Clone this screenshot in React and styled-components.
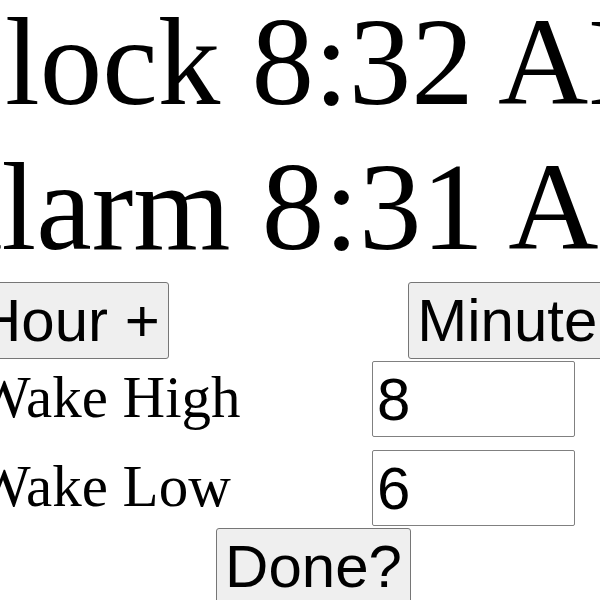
import React, { useState } from "react";
import styled, { createGlobalStyle } from "styled-components";

const GlobalStyle = createGlobalStyle`
html, body {
    margin: 0;
    padding: 0;
    overflow: hidden;
    background-color: #fff;
}
`;

function App() {
    const [wakeHigh, setWakeHigh] = useState('8')
    const [wakeLow, setWakeLow] = useState('6')

    return (
        <>
            <GlobalStyle />
            <Page>
                <Time>Clock 8:32 AM</Time>
                <Time>Alarm 8:31 AM</Time>
                <ButtonRow>
                    <Button>Hour +</Button>
                    <Button>Minute +</Button>
                </ButtonRow>
                <Settings>
                    <Label htmlFor="wake-high">Wake High</Label>
                    <Input id="wake-high" type="text" value={wakeHigh} onChange={(e) => setWakeHigh(e.target.value)} />
                    <Label htmlFor="wake-low">Wake Low</Label>
                    <Input id="wake-low" type="text" value={wakeLow} onChange={(e) => setWakeLow(e.target.value)} />
                </Settings>
                <Button $top={2}>Done?</Button>
            </Page>
        </>
    )
}

const Page = styled.div`
display: flex;
flex-direction: column;
align-items: center;
width: 689px;
margin-top: -10px;
margin-left: -31px;
`;

const Time = styled.h1`
margin: 0;
padding-right: 6px;
font-family: "Liberation Serif", "Times New Roman", serif;
font-size: 125px;
font-weight: normal;
line-height: 145px;
white-space: nowrap;
color: #000;
`;

const ButtonRow = styled.div`
display: flex;
justify-content: space-between;
align-self: stretch;
margin-top: 2px;
`;

const Button = styled.button`
font-family: "Liberation Sans", Arial, sans-serif;
font-size: 60px;
line-height: normal;
color: #000;
background-color: #efefef;
border: 1px solid #767676;
border-radius: 3px;
padding: 3px 8px;
white-space: nowrap;
margin-top: ${props => props.$top || 0}px;
`;

const Settings = styled.div`
display: grid;
grid-template-columns: 403px 203px;
row-gap: 13px;
align-items: center;
align-self: flex-start;
margin-top: 2px;
`;

const Label = styled.label`
font-family: "Liberation Serif", "Times New Roman", serif;
font-size: 59px;
white-space: nowrap;
color: #000;
margin-bottom: 4px;
padding-left: 6px;
`;

const Input = styled.input`
box-sizing: border-box;
width: 203px;
height: 76px;
font-family: "Liberation Sans", Arial, sans-serif;
font-size: 60px;
color: #000;
padding: 1px 4px;
border: 1px solid #808080;
border-radius: 2px;
background-color: #fff;
outline: none;
`;

export default App
